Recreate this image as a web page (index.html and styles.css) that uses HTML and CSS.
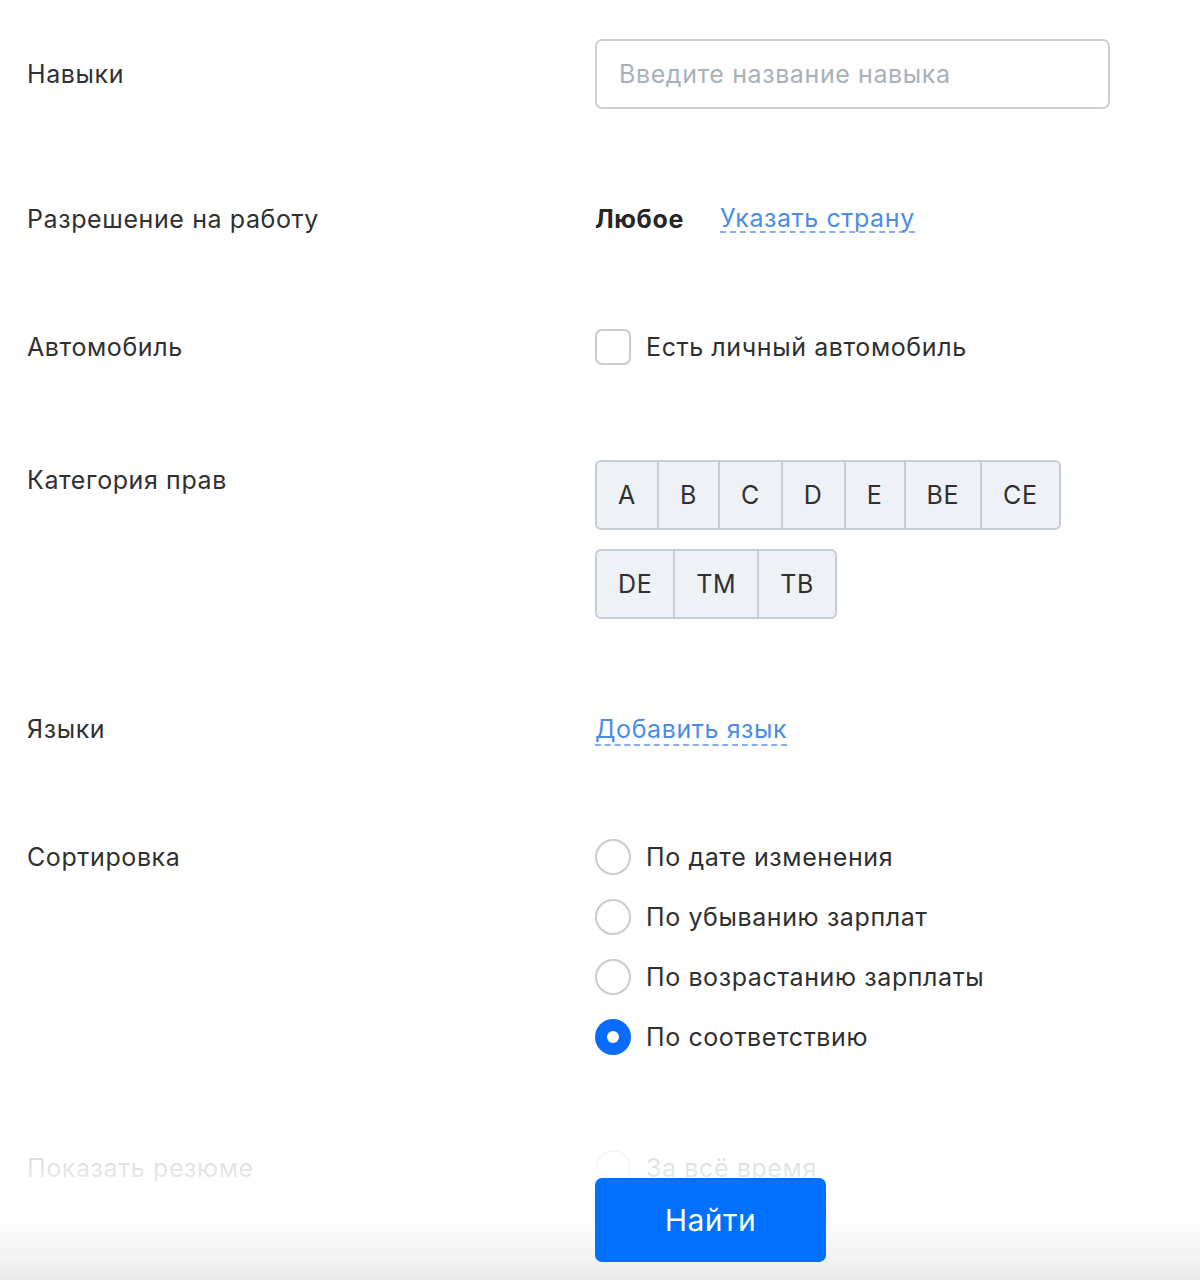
FILE: index.html
```html
<!DOCTYPE html>
<html lang="ru">
<head>
<meta charset="utf-8">
<title>Фильтры</title>
<link rel="stylesheet" href="styles.css">
</head>
<body>
<main class="form">
  <div class="row row-center first">
    <div class="label">Навыки</div>
    <div class="control">
      <div class="input"><span class="placeholder">Введите название навыка</span></div>
    </div>
  </div>

  <div class="row row-center">
    <div class="label">Разрешение на работу</div>
    <div class="control inline">
      <span class="bold">Любое</span>
      <a class="pseudo-link">Указать страну</a>
    </div>
  </div>

  <div class="row row-center">
    <div class="label">Автомобиль</div>
    <div class="control">
      <label class="option"><span class="checkbox"></span><span>Есть личный автомобиль</span></label>
    </div>
  </div>

  <div class="row">
    <div class="label label-offset">Категория прав</div>
    <div class="control">
      <div class="btn-groups">
        <div class="btn-group">
          <span class="seg">A</span><span class="seg">B</span><span class="seg">C</span><span class="seg">D</span><span class="seg">E</span><span class="seg">BE</span><span class="seg">CE</span>
        </div>
        <div class="btn-group">
          <span class="seg">DE</span><span class="seg">TM</span><span class="seg">TB</span>
        </div>
      </div>
    </div>
  </div>

  <div class="row row-center">
    <div class="label">Языки</div>
    <div class="control">
      <a class="pseudo-link">Добавить язык</a>
    </div>
  </div>

  <div class="row">
    <div class="label label-radio">Сортировка</div>
    <div class="control radios">
      <label class="option"><span class="radio"></span><span>По дате изменения</span></label>
      <label class="option"><span class="radio"></span><span>По убыванию зарплат</span></label>
      <label class="option"><span class="radio"></span><span>По возрастанию зарплаты</span></label>
      <label class="option"><span class="radio checked"></span><span>По соответствию</span></label>
    </div>
  </div>

  <div class="row">
    <div class="label label-radio">Показать резюме</div>
    <div class="control radios">
      <label class="option"><span class="radio"></span><span>За всё время</span></label>
      <label class="option"><span class="radio"></span><span>За месяц</span></label>
      <label class="option"><span class="radio"></span><span>За неделю</span></label>
    </div>
  </div>
</main>

<footer class="sticky-footer">
  <div class="footer-inner">
    <div></div>
    <div><button class="submit">Найти</button></div>
  </div>
</footer>
</body>
</html>
```

FILE: styles.css
```css
* { box-sizing: border-box; }

html, body {
  margin: 0;
  padding: 0;
  background: #fff;
}

body {
  font-family: Inter, "Noto Sans", "Liberation Sans", sans-serif;
  font-size: 25px;
  letter-spacing: 0.6px;
  line-height: 30px;
  color: #2f2f2f;
}

.form {
  padding: 39px 0 200px 27px;
}

.row {
  display: grid;
  grid-template-columns: 568px 1fr;
  margin-top: 95px;
}

.row.first { margin-top: 0; }

.row-center { align-items: center; }

.label { color: #303030; }

.label-offset { padding-top: 5px; }
.label-radio { padding-top: 3px; }

.input {
  width: 515px;
  height: 70px;
  border: 2px solid #cdd1d6;
  border-radius: 7px;
  padding: 0 22px;
  display: flex;
  align-items: center;
}

.placeholder { color: #a9b0b8; }

.inline {
  display: flex;
  gap: 36px;
  align-items: center;
}

.bold { font-weight: 700; color: #262626; }

.pseudo-link {
  color: #4a8de6;
  text-decoration: none;
  border-bottom: 2px dashed #86aee8;
  line-height: 26px;
  cursor: pointer;
}

.option {
  display: flex;
  align-items: center;
  gap: 15px;
  color: #2f2f2f;
}

.checkbox {
  width: 36px;
  height: 36px;
  border: 2px solid #cbcbcb;
  border-radius: 7px;
  flex: none;
}

.btn-groups {
  display: flex;
  flex-direction: column;
  gap: 19px;
  align-items: flex-start;
}

.btn-group {
  display: flex;
  border: 2px solid #c6ccd4;
  border-radius: 6px;
  overflow: hidden;
  background: #eef1f6;
}

.seg {
  height: 66px;
  padding: 0 21px;
  display: flex;
  align-items: center;
  justify-content: center;
  min-width: 60px;
  color: #2f2f2f;
  border-left: 2px solid #c6ccd4;
}

.seg:first-child { border-left: none; }

.radios {
  display: flex;
  flex-direction: column;
  gap: 24px;
}

.radio {
  width: 36px;
  height: 36px;
  border-radius: 50%;
  border: 2px solid #cbcbcb;
  flex: none;
  display: flex;
  align-items: center;
  justify-content: center;
}

.radio.checked {
  border: none;
  background: #0a6cff;
}

.radio.checked::after {
  content: "";
  width: 12px;
  height: 12px;
  border-radius: 50%;
  background: #fff;
}

.sticky-footer {
  position: fixed;
  left: 0;
  right: 0;
  bottom: 0;
  height: 185px;
  background: linear-gradient(180deg,
    rgba(255,255,255,0) 0,
    rgba(255,255,255,0.82) 50px,
    rgba(255,255,255,0.9) 90px,
    rgba(253,253,253,0.97) 125px,
    rgba(244,244,244,0.99) 160px,
    #eaeaea 100%);
}

.footer-inner {
  display: grid;
  grid-template-columns: 595px 1fr;
  padding-top: 83px;
}

.submit {
  width: 231px;
  height: 84px;
  border: none;
  border-radius: 7px;
  background: #0070ff;
  color: #fff;
  font-family: Inter, "Noto Sans", "Liberation Sans", sans-serif;
  font-size: 30px;
  letter-spacing: 0.5px;
  cursor: pointer;
}
```
